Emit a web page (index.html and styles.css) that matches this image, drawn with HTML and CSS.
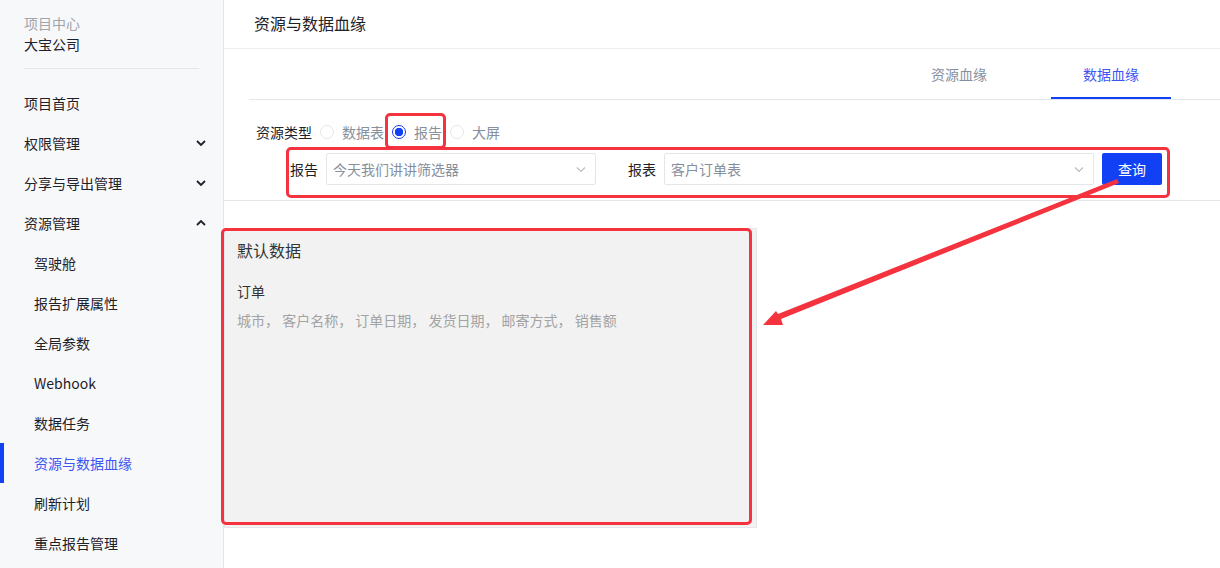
FILE: index.html
```html
<!DOCTYPE html>
<html lang="zh-CN">
  <head>
    <meta charset="UTF-8" />
    <meta name="viewport" content="width=device-width, initial-scale=1.0" />
    <title>资源与数据血缘</title>
    <link rel="stylesheet" href="styles.css">
  </head>
  <body>
    <div class="page">
      <aside class="sidebar">
        <div class="project">
          <div class="project-label">项目中心</div>
          <div class="project-name">大宝公司</div>
        </div>
        <ul class="menu">
          <li class="menu-item">项目首页</li>
          <li class="menu-item">权限管理
            <svg class="chevron" viewBox="0 0 12 12"><path d="M2 4l4 4 4-4" /></svg>
          </li>
          <li class="menu-item">分享与导出管理
            <svg class="chevron" viewBox="0 0 12 12"><path d="M2 4l4 4 4-4" /></svg>
          </li>
          <li class="menu-item">资源管理
            <svg class="chevron" viewBox="0 0 12 12"><path d="M2 8l4-4 4 4" /></svg>
          </li>
          <li class="menu-item sub">驾驶舱</li>
          <li class="menu-item sub">报告扩展属性</li>
          <li class="menu-item sub">全局参数</li>
          <li class="menu-item sub">Webhook</li>
          <li class="menu-item sub">数据任务</li>
          <li class="menu-item sub active">资源与数据血缘</li>
          <li class="menu-item sub">刷新计划</li>
          <li class="menu-item sub">重点报告管理</li>
        </ul>
      </aside>

      <main class="main">
        <div class="page-title">资源与数据血缘</div>

        <div class="tabs-wrap">
          <div class="tabs">
            <div class="tab">资源血缘</div>
            <div class="tab active">数据血缘</div>
          </div>
        </div>

        <div class="filters">
          <div class="type-row">
            <span class="type-label">资源类型</span>
            <label class="radio"><span class="dot"></span>数据表</label>
            <label class="radio checked"><span class="dot"></span>报告</label>
            <label class="radio"><span class="dot"></span>大屏</label>
          </div>
          <div class="query-row">
            <span class="field-label">报告</span>
            <div class="select select-report">
              <span>今天我们讲讲筛选器</span>
              <svg class="caret" viewBox="0 0 12 12"><path d="M2 4.5l4 4 4-4" /></svg>
            </div>
            <span class="field-label second">报表</span>
            <div class="select select-table">
              <span>客户订单表</span>
              <svg class="caret" viewBox="0 0 12 12"><path d="M2 4.5l4 4 4-4" /></svg>
            </div>
            <button class="btn-query">查询</button>
          </div>
        </div>

        <div class="result">
          <div class="result-title">默认数据</div>
          <div class="result-name">订单</div>
          <div class="result-fields">城市， 客户名称， 订单日期， 发货日期， 邮寄方式， 销售额</div>
        </div>
      </main>

      <!-- 标注 -->
      <div class="mark mark-radio"></div>
      <div class="mark mark-query"></div>
      <div class="mark mark-result"></div>
      <svg class="arrow" width="1220" height="568" viewBox="0 0 1220 568">
        <polygon points="1117,179 1119,183 781,319 783,325 763,325 776,311 778,314" fill="#f5333f" />
      </svg>
    </div>
  </body>
</html>
```

FILE: styles.css
```css
* {
  box-sizing: border-box;
}
body {
  margin: 0;
  font-family: "Noto Sans CJK SC", "Noto Sans", sans-serif;
  font-size: 14px;
  color: #1d2129;
  background-color: #fff;
}
.page {
  position: relative;
  display: flex;
  width: 1220px;
  height: 568px;
  overflow: hidden;
}
.sidebar {
  width: 224px;
  flex-shrink: 0;
  background-color: #f7f8fa;
  border-right: 1px solid #e5e6eb;
}
.project {
  margin: 0 24px;
  padding-top: 13px;
  padding-bottom: 13px;
  border-bottom: 1px solid #e5e6eb;
}
.project-label {
  line-height: 20px;
  color: #a0a4ab;
}
.project-name {
  line-height: 22px;
  color: #1d2129;
}
.menu {
  list-style: none;
  margin: 14px 0 0;
  padding: 0;
}
.menu-item {
  position: relative;
  display: flex;
  align-items: center;
  height: 40px;
  padding-left: 24px;
  color: #1d2129;
}
.menu-item.sub {
  padding-left: 34px;
}
.menu-item.active {
  color: #3d55f5;
}
.menu-item.active::before {
  content: "";
  position: absolute;
  left: 0;
  top: 0;
  bottom: 0;
  width: 4px;
  background-color: #1241f5;
}
.chevron {
  position: absolute;
  right: 16px;
  top: 14px;
  width: 12px;
  height: 12px;
  fill: none;
  stroke: #1d2129;
  stroke-width: 1.8;
}
.main {
  flex: 1;
  display: flex;
  flex-direction: column;
}
.page-title {
  height: 49px;
  padding-left: 30px;
  line-height: 46px;
  font-size: 16px;
  color: #1d2129;
  border-bottom: 1px solid #ebedf2;
}
.tabs-wrap {
  padding-left: 25px;
}
.tabs {
  display: flex;
  justify-content: flex-end;
  gap: 32px;
  padding-right: 49px;
  border-bottom: 1px solid #e5e6eb;
}
.tab {
  width: 120px;
  height: 50px;
  line-height: 50px;
  text-align: center;
  color: #86909c;
}
.tab.active {
  color: #3d55f5;
  border-bottom: 2px solid #1241f5;
  margin-bottom: -1px;
}
.filters {
  padding: 22px 0 15px 32px;
  border-bottom: 1px solid #e5e6eb;
}
.type-row {
  display: flex;
  align-items: center;
  height: 20px;
  color: #86909c;
}
.type-label {
  color: #1d2129;
  margin-right: 8px;
}
.radio {
  display: flex;
  align-items: center;
  margin-right: 8px;
}
.radio .dot {
  width: 14px;
  height: 14px;
  border: 1px solid #e5e6eb;
  border-radius: 50%;
  margin-right: 8px;
  background-color: #fff;
}
.radio.checked .dot {
  border: 1px solid #1241f5;
  background: radial-gradient(circle, #1241f5 0 4px, #fff 4.5px);
}
.query-row {
  display: flex;
  align-items: center;
  margin-top: 11px;
  padding-left: 34px;
}
.field-label {
  color: #1d2129;
  margin-right: 8px;
}
.field-label.second {
  margin-left: 32px;
}
.select {
  display: flex;
  align-items: center;
  justify-content: space-between;
  height: 32px;
  padding: 0 8px 0 6px;
  border: 1px solid #e5e6eb;
  border-radius: 2px;
  color: #86909c;
}
.select-report {
  width: 270px;
}
.select-table {
  width: 430px;
}
.caret {
  width: 12px;
  height: 12px;
  fill: none;
  stroke: #b8bcc4;
  stroke-width: 1.2;
}
.btn-query {
  width: 60px;
  height: 32px;
  margin-left: 8px;
  border: none;
  border-radius: 2px;
  background-color: #1241f5;
  color: #fff;
  font-family: inherit;
  font-size: 14px;
}
.result {
  width: 533px;
  height: 300px;
  margin-top: 27px;
  padding: 9px 12px;
  background-color: #f2f2f2;
  border: 1px solid #e5e6eb;
}
.result-title {
  font-size: 16px;
  line-height: 24px;
  color: #333;
}
.result-name {
  margin-top: 19px;
  line-height: 20px;
  color: #333;
}
.result-fields {
  margin-top: 9px;
  line-height: 20px;
  color: #a3a3a3;
}
.mark {
  position: absolute;
  border: 3px solid #f5333f;
  border-radius: 5px;
}
.mark-radio {
  left: 385px;
  top: 113px;
  width: 61px;
  height: 36px;
}
.mark-query {
  left: 286px;
  top: 147px;
  width: 884px;
  height: 51px;
}
.mark-result {
  left: 221px;
  top: 228px;
  width: 531px;
  height: 297px;
}
.arrow {
  position: absolute;
  left: 0;
  top: 0;
  pointer-events: none;
}
```
